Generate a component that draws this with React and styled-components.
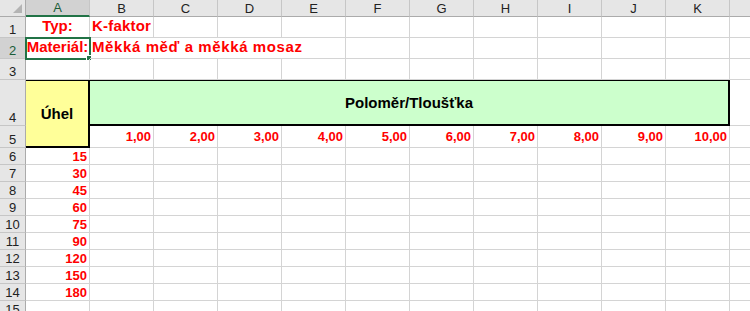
import React from 'react';
import styled, { createGlobalStyle } from 'styled-components';

const GlobalStyle = createGlobalStyle`
    html, body {
        margin: 0;
        padding: 0;
        background: #fff;
        overflow: hidden;
    }
`;

const COLS = ['A', 'B', 'C', 'D', 'E', 'F', 'G', 'H', 'I', 'J', 'K', 'L'];
const ANGLES = [15, 30, 45, 60, 75, 90, 120, 150, 180];
const RADII = ['1,00', '2,00', '3,00', '4,00', '5,00', '6,00', '7,00', '8,00', '9,00', '10,00'];

const Sheet = styled.div`
    display: grid;
    grid-template-columns: 26px repeat(12, 64px);
    grid-template-rows: 17px 21px 21px 21px 46px 22px repeat(10, 17px);
    width: 750px;
    height: 311px;
    overflow: hidden;
    font-family: "Liberation Sans", Arial, sans-serif;
`;

const Corner = styled.div`
    background: #e6e6e6;
    border-right: 1px solid #ababab;
    border-bottom: 1px solid #ababab;
    display: flex;
    align-items: flex-end;
    justify-content: flex-end;
    padding: 0 3px 3px 0;
`;

const ColHeader = styled.div`
    background: ${p => (p.$selected ? '#d2d2d2' : '#e6e6e6')};
    border-right: 1px solid #c6c6c6;
    border-bottom: ${p => (p.$selected ? '2px solid #217346' : '1px solid #ababab')};
    display: flex;
    align-items: center;
    justify-content: center;
    font-size: 13px;
    color: ${p => (p.$selected ? '#1a5c38' : '#222')};
`;

const RowHeader = styled.div`
    background: ${p => (p.$selected ? '#d2d2d2' : '#e6e6e6')};
    border-right: 1px solid #ababab;
    border-bottom: 1px solid #c6c6c6;
    display: flex;
    align-items: flex-end;
    justify-content: center;
    font-size: 13px;
    line-height: 15px;
    color: ${p => (p.$selected ? '#1a5c38' : '#222')};
`;

const Cell = styled.div`
    position: relative;
    grid-column: span ${p => p.$span || 1};
    border-right: 1px solid #d4d4d4;
    border-bottom: 1px solid #d4d4d4;
    display: flex;
    align-items: flex-end;
    justify-content: ${p => p.$align || 'flex-start'};
    padding: 0 2px ${p => p.$pb || 0}px 2px;
    white-space: nowrap;
    font-weight: bold;
    font-size: ${p => p.$size || 13}px;
    line-height: ${p => (p.$size === 15 ? 17 : 15)}px;
    letter-spacing: ${p => p.$spacing || 0}px;
    color: #ff0000;
    min-width: 0;
`;

const ActiveCell = styled(Cell)`
    outline: 2px solid #217346;
    outline-offset: -1px;
    justify-content: center;
`;

const FillHandle = styled.span`
    position: absolute;
    right: -3px;
    bottom: -3px;
    width: 4px;
    height: 4px;
    background: #217346;
    border: 1px solid #fff;
`;

const AngleHead = styled.div`
    grid-row: span 2;
    margin-top: -1px;
    background: #ffff99;
    border-top: 2px solid #000;
    border-right: 2px solid #000;
    border-bottom: 2px solid #000;
    display: flex;
    align-items: center;
    justify-content: center;
    font-weight: bold;
    font-size: 15px;
    color: #000;
`;

const RadiusHead = styled.div`
    grid-column: span 10;
    margin: -1px 0 0 -2px;
    background: #ccffcc;
    border: 2px solid #000;
    display: flex;
    align-items: center;
    justify-content: center;
    font-weight: bold;
    font-size: 15px;
    color: #000;
`;

const CornerMark = () => (
    <svg width="9" height="9" viewBox="0 0 9 9">
        <polygon points="9,0 9,9 0,9" fill="#b4b4b4" />
    </svg>
);

const blanks = (from, row) =>
    COLS.slice(from).map(c => <Cell key={c + row} />);

const App = () => {
    const rows = [];

    rows.push(<RowHeader key="r1">1</RowHeader>);
    rows.push(<Cell key="A1" $align="center" $size={15} $pb={3}>Typ:</Cell>);
    rows.push(<Cell key="B1" $size={15} $pb={3} $spacing={0.2}>K-faktor</Cell>);
    rows.push(...blanks(2, 1));

    rows.push(<RowHeader key="r2" $selected>2</RowHeader>);
    rows.push(
        <ActiveCell key="A2" $size={15} $pb={3}>
            Materiál:
            <FillHandle />
        </ActiveCell>
    );
    rows.push(
        <Cell key="B2" $span={4} $size={15} $pb={3} $spacing={0.6}>
            Měkká měď a měkká mosaz
        </Cell>
    );
    rows.push(...blanks(5, 2));

    rows.push(<RowHeader key="r3">3</RowHeader>);
    rows.push(...blanks(0, 3));

    rows.push(<RowHeader key="r4">4</RowHeader>);
    rows.push(<AngleHead key="A4">Úhel</AngleHead>);
    rows.push(<RadiusHead key="B4">Poloměr/Tloušťka</RadiusHead>);
    rows.push(<Cell key="L4" />);

    rows.push(<RowHeader key="r5">5</RowHeader>);
    RADII.forEach((v, i) => rows.push(<Cell key={'R' + i} $align="flex-end" $pb={3}>{v}</Cell>));
    rows.push(<Cell key="L5" />);

    ANGLES.forEach((a, i) => {
        const r = i + 6;
        rows.push(<RowHeader key={'r' + r}>{r}</RowHeader>);
        rows.push(<Cell key={'A' + r} $align="flex-end">{a}</Cell>);
        rows.push(...blanks(1, r));
    });

    rows.push(<RowHeader key="r15">15</RowHeader>);
    rows.push(...blanks(0, 15));

    return (
        <>
            <GlobalStyle />
            <Sheet>
                <Corner><CornerMark /></Corner>
                {COLS.map(c => (
                    <ColHeader key={c} $selected={c === 'A'}>
                        {c === 'L' ? '' : c}
                    </ColHeader>
                ))}
                {rows}
            </Sheet>
        </>
    );
};

export default App;
